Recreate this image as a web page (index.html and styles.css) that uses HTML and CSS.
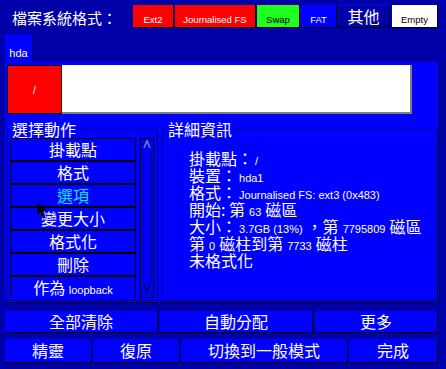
FILE: index.html
```html
<!DOCTYPE html>
<html lang="zh-Hant">
<head>
<meta charset="utf-8">
<link rel="stylesheet" href="styles.css">
</head>
<body>
<div class="screen">
  <div class="topbar">
    <div class="title">檔案系統格式：</div>
    <div class="fsbar">
      <span class="fs ext2">Ext2</span>
      <span class="fs jfs">Journalised FS</span>
      <span class="fs swap">Swap</span>
      <span class="fs fat">FAT</span>
      <span class="fs other">其他</span>
      <span class="fs empty">Empty</span>
    </div>
  </div>
  <div class="tabs"><div class="tab">hda</div></div>
  <div class="panel">
    <div class="partbar">
      <div class="part root">/</div>
      <div class="part free"></div>
    </div>
    <div class="groups">
      <fieldset class="group actions">
        <legend>選擇動作</legend>
        <div class="actions-body">
          <ul class="list">
            <li>掛載點</li>
            <li>格式</li>
            <li class="sel">選項</li>
            <li>變更大小</li>
            <li>格式化</li>
            <li>刪除</li>
            <li>作為 <span class="sm">loopback</span></li>
          </ul>
          <div class="scrollbar">
            <div class="arrow up"><svg width="12" height="10" viewBox="0 0 12 10"><path d="M3 9 L6 2 L9 9" fill="none" stroke="#8080a0" stroke-width="1.5"/></svg></div>
            <div class="track"></div>
            <div class="arrow down"><svg width="12" height="14" viewBox="0 0 12 14"><path d="M3 3 L6 11 L9 3" fill="none" stroke="#000060" stroke-width="1.5"/></svg></div>
          </div>
        </div>
      </fieldset>
      <fieldset class="group details">
        <legend>詳細資訊</legend>
        <div class="info">
          <div class="ln">掛載點：<span class="sm nl">/</span></div>
          <div class="ln">裝置：<span class="sm nl">hda1</span></div>
          <div class="ln">格式：<span class="sm nl">Journalised FS: ext3 (0x483)</span></div>
          <div class="ln">開始: 第<span class="sm">63</span>磁區</div>
          <div class="ln">大小：<span class="sm nl">3.7GB (13%)</span>，第<span class="sm">7795809</span>磁區</div>
          <div class="ln">第<span class="sm">0</span>磁柱到第<span class="sm">7733</span>磁柱</div>
          <div class="ln">未格式化</div>
        </div>
      </fieldset>
    </div>
  </div>
  <div class="buttons row1">
    <span class="btn w153">全部清除</span>
    <span class="btn w153">自動分配</span>
    <span class="btn w123">更多</span>
  </div>
  <div class="buttons row2">
    <span class="btn w87">精靈</span>
    <span class="btn w87">復原</span>
    <span class="btn w167">切換到一般模式</span>
    <span class="btn w89">完成</span>
  </div>
  <svg class="cursor" width="10" height="16" viewBox="0 0 10 16"><path d="M0.5 0.5 L0.5 13 L3.5 10 L6 15.5 L8 14.5 L5.5 9 L9.5 9 Z" fill="#000" stroke="#000040" stroke-width="0.8"/></svg>
</div>
</body>
</html>
```
FILE: styles.css
```css
* { box-sizing: border-box; }
html, body { margin: 0; padding: 0; background: #0000a8; }
.screen {
  position: relative;
  width: 446px;
  height: 369px;
  overflow: hidden;
  background: #0000a8;
  color: #fff;
  font-family: "Noto Sans CJK TC", "Liberation Sans", sans-serif;
}
.sm { font-family: "Liberation Sans", sans-serif; font-size: 11px; }

.topbar { display: flex; height: 34px; align-items: flex-start; }
.title { width: 133px; padding-left: 12px; font-size: 15px; line-height: 34px; padding-top: 1px; white-space: nowrap; }
.fsbar { display: flex; gap: 1px; margin-top: 5px; }
.fs {
  height: 23px;
  padding-top: 8px;
  font-family: "Liberation Sans", sans-serif;
  font-size: 9.5px;
  line-height: 14px;
  text-align: center;
  border-right: 1px solid #000;
  border-bottom: 1px solid #000;
}
.ext2 { width: 41px; background: #ff0000; }
.jfs { width: 81px; background: #ff0000; }
.swap { width: 43px; background: #20ff20; color: #000; }
.fat { width: 36px; background: #0000ff; }
.other { width: 52px; background: #0000a8; border-top: 1px solid #0000ff; font-family: "Noto Sans CJK TC", sans-serif; font-size: 16px; padding-top: 0; line-height: 21px; }
.empty { width: 46px; background: #fff; color: #000; margin-left: 1px; }

.tabs { height: 28px; display: flex; }
.tab {
  margin-left: 5px;
  width: 28px;
  height: 28px;
  background: #0000ff;
  border-right: 1px solid #000070;
  font-family: "Liberation Sans", sans-serif;
  font-size: 11px;
  line-height: 14px;
  padding-top: 12px;
  text-align: center;
}

.panel {
  margin-left: 5px;
  width: 435px;
  height: 241px;
  background: #0000ff;
  border-right: 1px solid #000;
  border-bottom: 1px solid #000030;
  padding: 3px 0 0 2px;
}
.partbar { display: flex; width: 405px; height: 49px; }
.part.root {
  width: 55px;
  background: #ff0000;
  border: 1px solid #000;
  border-right-color: #402000;
  font-family: "Liberation Sans", sans-serif;
  font-size: 10px;
  text-align: center;
  padding-top: 19px;
}
.part.free { flex: 1; background: #fff; border-right: 2px solid #808080; border-bottom: 2px solid #808080; }

.groups { display: flex; gap: 4px; margin-top: 6px; }
.group {
  margin: 0;
  height: 181px;
  border: 1px solid #0000a0;
  border-right-color: #000060;
  border-bottom-color: #000060;
  padding: 0 0 1px 2px;
  min-width: 0;
}
.group legend {
  font-size: 16px;
  line-height: 18px;
  padding: 0 2px;
}
.actions { width: 151px; }
.details { width: 276px; padding-left: 3px; }

.actions-body { display: flex; gap: 4px; }
.list {
  list-style: none;
  margin: 0;
  padding: 0;
  width: 126px;
  height: 160px;
  overflow: hidden;
  border: 1px solid #000;
  border-bottom: none;
}
.list li {
  height: 23px;
  border-bottom: 2px solid #000;
  text-align: center;
  font-size: 16px;
  line-height: 21px;
  white-space: nowrap;
}
.list li.sel { color: #00e8f0; }

.scrollbar {
  width: 14px;
  height: 160px;
  border: 1px solid #000;
  display: flex;
  flex-direction: column;
}
.arrow { display: flex; justify-content: center; }
.arrow.up { height: 12px; }
.arrow.down { height: 16px; }
.track { flex: 1; margin: 0 2px; border-left: 1px solid #000080; border-right: 1px solid #000080; }

.info { padding: 12px 0 0 23px; font-size: 16px; white-space: nowrap; }
.ln { height: 17px; line-height: 17px; display: flex; align-items: baseline; }
.ln .sm { margin: 0 4px; }
.ln .sm.nl { margin-left: 2px; }

.buttons { display: flex; margin-left: 5px; }
.row1 { margin-top: 8px; gap: 2px; }
.row2 { margin-top: 6px; gap: 1px; }
.btn {
  background: #0000ff;
  border-right: 1px solid #000;
  border-bottom: 1px solid #000;
  text-align: center;
  font-size: 16px;
  white-space: nowrap;
}
.row1 .btn { height: 22px; line-height: 21px; }
.row2 .btn { height: 24px; line-height: 23px; }
.w153 { width: 153px; }
.w123 { width: 123px; }
.w87 { width: 87px; }
.w167 { width: 167px; }
.w89 { width: 89px; }

.cursor { position: absolute; left: 37px; top: 202px; }
```
